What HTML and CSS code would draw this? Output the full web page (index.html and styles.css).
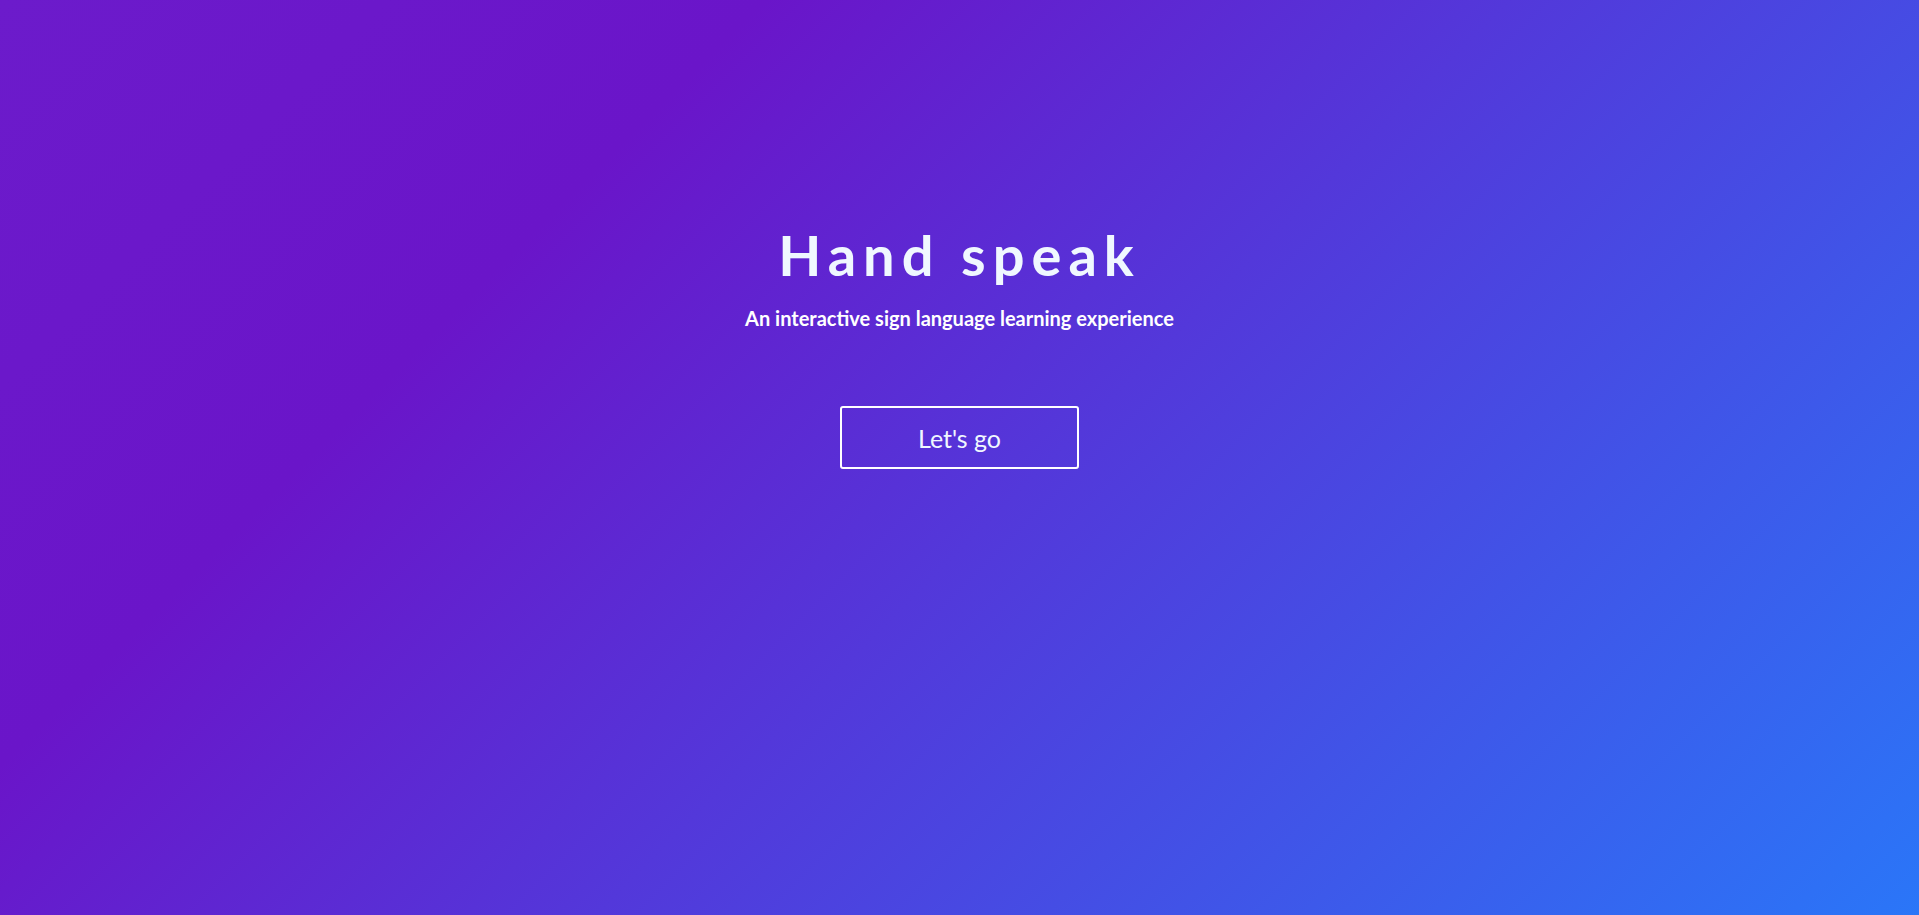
FILE: index.html
```html
<!DOCTYPE html>
<html lang="en">
<head>
<meta charset="utf-8">
<title>Hand speak</title>
<link rel="stylesheet" href="styles.css">
</head>
<body>
<main class="hero">
  <h1 class="hero-title">Hand speak</h1>
  <p class="hero-subtitle">An interactive sign language learning experience</p>
  <button class="hero-button" type="button">Let's go</button>
</main>
</body>
</html>
```
FILE: styles.css
```css
html, body {
  margin: 0;
  padding: 0;
  height: 100%;
}
body {
  font-family: Lato, "Open Sans", "Liberation Sans", sans-serif;
  color: #f0f8ff;
  background: linear-gradient(135deg, #6c1bcb 0%, #6a15c9 27%, #2a76f8 100%);
  overflow: hidden;
}
.hero {
  display: flex;
  flex-direction: column;
  align-items: center;
  padding-top: 221px;
}
.hero-title {
  margin: 0;
  font-size: 56px;
  line-height: 68px;
  font-weight: 700;
  letter-spacing: 7px;
  color: #f0f8ff;
}
.hero-subtitle {
  margin: 17px 0 0;
  font-size: 20px;
  line-height: 24px;
  font-weight: 700;
  color: #ffffff;
}
.hero-button {
  margin-top: 76px;
  width: 239px;
  height: 63px;
  background: transparent;
  border: 2px solid #ffffff;
  border-radius: 3px;
  color: #f0f8ff;
  font-family: Lato, "Open Sans", "Liberation Sans", sans-serif;
  font-size: 25px;
  cursor: pointer;
}
```
